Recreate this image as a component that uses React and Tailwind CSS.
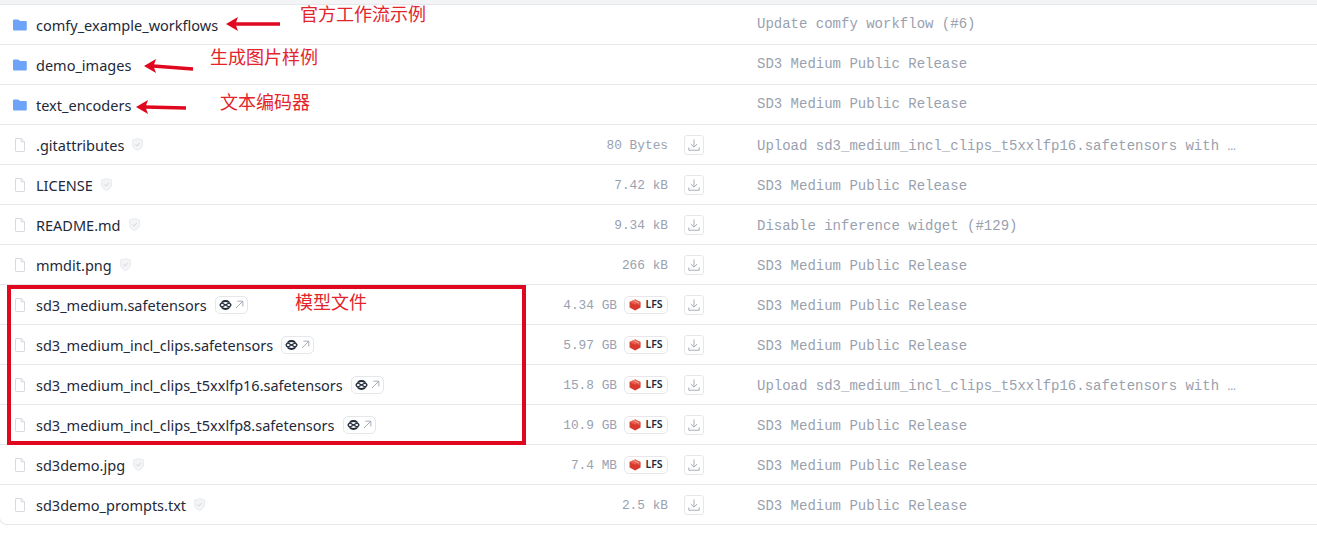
import React from 'react';

const FOLDERS = [
  { name: 'comfy_example_workflows', commit: 'Update comfy workflow (#6)' },
  { name: 'demo_images', commit: 'SD3 Medium Public Release' },
  { name: 'text_encoders', commit: 'SD3 Medium Public Release' },
];

const UPLOAD_MSG = 'Upload sd3_medium_incl_clips_t5xxlfp16.safetensors with …';
const RELEASE_MSG = 'SD3 Medium Public Release';

const FILES = [
  { name: '.gitattributes', size: '80 Bytes', commit: UPLOAD_MSG, safe: true },
  { name: 'LICENSE', size: '7.42 kB', commit: RELEASE_MSG, safe: true },
  { name: 'README.md', size: '9.34 kB', commit: 'Disable inference widget (#129)', safe: true },
  { name: 'mmdit.png', size: '266 kB', commit: RELEASE_MSG, safe: true },
  { name: 'sd3_medium.safetensors', size: '4.34 GB', commit: RELEASE_MSG, lfs: true, xet: true },
  { name: 'sd3_medium_incl_clips.safetensors', size: '5.97 GB', commit: RELEASE_MSG, lfs: true, xet: true },
  { name: 'sd3_medium_incl_clips_t5xxlfp16.safetensors', size: '15.8 GB', commit: UPLOAD_MSG, lfs: true, xet: true },
  { name: 'sd3_medium_incl_clips_t5xxlfp8.safetensors', size: '10.9 GB', commit: RELEASE_MSG, lfs: true, xet: true },
  { name: 'sd3demo.jpg', size: '7.4 MB', commit: RELEASE_MSG, lfs: true, safe: true },
  { name: 'sd3demo_prompts.txt', size: '2.5 kB', commit: RELEASE_MSG, safe: true },
];

const FolderIcon = () => (
  <svg width="14" height="12" viewBox="0 0 14 12" className="shrink-0">
    <path d="M1.400 0.500h3.600c.5 0 .8.2 1.100.6l.8 1h5.700c.7 0 1.200.5 1.200 1.200v6.900c0 .8-.5 1.300-1.200 1.300H1.400C.6 11.500 0 11 0 10.200V1.800C0 1 .6.500 1.400.500z" fill="#6ea4f7" />
  </svg>
);

const FileIcon = () => (
  <svg width="10" height="14" viewBox="0 0 10 14" fill="none" stroke="#d1d5db" strokeWidth="0.9" className="ml-[2px] shrink-0">
    <path d="M.5 1.200c0-.4.3-.7.7-.7h5l3.300 3.400v8.900c0 .4-.3.7-.7.7H1.200c-.4 0-.7-.3-.7-.7z" />
    <path d="M6.200.600v3.300h3.200" />
  </svg>
);

const ShieldIcon = () => (
  <svg width="11" height="13" viewBox="0 0 11 13" className="ml-2 shrink-0">
    <path d="M5.500.5l5 1.500v4.400c0 3-2.200 5-5 6.100-2.800-1.100-5-3.100-5-6.100V2z" fill="#f3f4f6" stroke="#e5e7eb" strokeWidth="0.8" />
    <path d="M3.400 6.500l1.500 1.500 2.800-2.900" fill="none" stroke="#d1d5db" strokeWidth="1" />
  </svg>
);

const XetBadge = () => (
  <span className="ml-2 flex h-[18px] w-[33px] shrink-0 items-center justify-center gap-[3px] rounded-[5px] border border-gray-200 bg-white">
    <svg width="13" height="10" viewBox="0 0 13 10" fill="none" stroke="#1f2937">
      <path d="M3 2.200C4.200 1.300 5.200 1 6.500 1s2.300.3 3.500 1.200" strokeWidth="1.800" />
      <path d="M3 7.800C4.200 8.700 5.200 9 6.500 9s2.300-.3 3.500-1.200" strokeWidth="1.800" />
      <path d="M.8 5c.9-1 1.400-1.500 2.200-2.500M.8 5c.9 1 1.400 1.500 2.200 2.500M12.200 5c-.9-1-1.400-1.500-2.200-2.500M12.200 5c-.9 1-1.400 1.500-2.200 2.500M3 3l7 4M10 3L3 7" strokeWidth="1.300" />
    </svg>
    <svg width="9" height="9" viewBox="0 0 9 9" fill="none" stroke="#9ca3af" strokeWidth="0.9">
      <path d="M1 8l6.500-6.500M2.500 1.200h5.300v5.300" />
    </svg>
  </span>
);

const LfsBadge = () => (
  <span className="ml-[7px] flex h-[18px] w-[44px] shrink-0 items-center justify-center gap-1 rounded-[5px] border border-gray-200 bg-white font-['Noto_Sans',sans-serif] text-[10.5px] font-semibold text-gray-800">
    <svg width="12" height="12" viewBox="0 0 11 11" className="shrink-0">
      <path d="M5.600.5l5 2.300v5L5.600 10.500.5 7.800v-5z" fill="#d63a2b" />
      <path d="M5.600 5.300l5-2.500L5.600.5.500 2.800z" fill="#e8604f" />
      <path d="M4 1.200l5 2.500v1.500" fill="none" stroke="#f7b4aa" strokeWidth="0.7" />
    </svg>
    <span className="pt-px">LFS</span>
  </span>
);

const DownloadButton = () => (
  <span className="ml-4 flex h-5 w-5 shrink-0 items-center justify-center rounded-[3px] border border-gray-200 bg-white">
    <svg width="12" height="12" viewBox="0 0 12 12" fill="none" stroke="#9ca3af" strokeWidth="0.9">
      <path d="M6 .5v7.500M2.800 5l3.200 3.200L9.200 5M.8 8.500v2.700h10.400V8.500" />
    </svg>
  </span>
);

const Row = ({ icon, item, last }) => (
  <div className={`flex items-center border-gray-200 ${last ? 'h-[39px]' : 'h-10 border-b'}`}>
    <div className="flex w-[668px] shrink-0 items-center pl-[13px]">
      <span className="flex w-[23px] shrink-0 justify-start">{icon}</span>
      <span className="pt-[2px] font-['Noto_Sans',sans-serif] text-[14.5px] text-gray-800">{item.name}</span>
      {item.safe && <ShieldIcon />}
      {item.xet && <XetBadge />}
      <span className="flex-1" />
      {item.size && <span className="pt-[2px] text-[12.8px] text-gray-400">{item.size}</span>}
      {item.lfs && <LfsBadge />}
    </div>
    <div className="flex w-[53px] shrink-0 items-center">
      {item.size && <DownloadButton />}
    </div>
    <div className={`ml-[36px] truncate text-[14px] text-gray-400 ${item.size ? 'pt-1' : ''}`}>{item.commit}</div>
  </div>
);

const Note = ({ className, children }) => (
  <span className={`absolute whitespace-nowrap font-['Noto_Sans_CJK_SC',sans-serif] text-[18px] leading-6 text-[#e3242b] ${className}`}>
    {children}
  </span>
);

const Arrow = ({ x1, y1, x2, y2 }) => (
  <g>
    <line x1={x1} y1={y1} x2={x2 + 9} y2={y2} stroke="#e0081f" strokeWidth="3.500" />
    <path d={`M${x2} ${y2}l12-7-2.500 7 2.500 7z`} fill="#e0081f" />
  </g>
);

export default function App() {
  return (
    <div className="relative h-[536px] w-[1317px] overflow-hidden bg-white font-['Liberation_Mono',monospace]">
      <div className="-ml-px rounded-bl-lg border-b border-l border-gray-200">
        <div className="h-[5px] border-b border-gray-200 bg-gray-100" />
        {FOLDERS.map((f) => (
          <Row key={f.name} item={f} icon={<FolderIcon />} />
        ))}
        {FILES.map((f, i) => (
          <Row key={f.name} item={f} icon={<FileIcon />} last={i === FILES.length - 1} />
        ))}
      </div>

      {/* annotations drawn on top of the screenshot */}
      <svg className="absolute left-0 top-0" width="300" height="130">
        <Arrow x1={280} y1={24} x2={226} y2={24} />
        <Arrow x1={193} y1={69} x2={144} y2={66} />
        <Arrow x1={186} y1={108} x2={136} y2={107} />
      </svg>
      <Note className="left-[300px] top-[1px]">官方工作流示例</Note>
      <Note className="left-[210px] top-[44px]">生成图片样例</Note>
      <Note className="left-[220px] top-[89px]">文本编码器</Note>
      <Note className="left-[295px] top-[289px]">模型文件</Note>
      <div className="absolute left-[7px] top-[285px] h-[160px] w-[519px] border-4 border-[#e0081f]" />
    </div>
  );
}
